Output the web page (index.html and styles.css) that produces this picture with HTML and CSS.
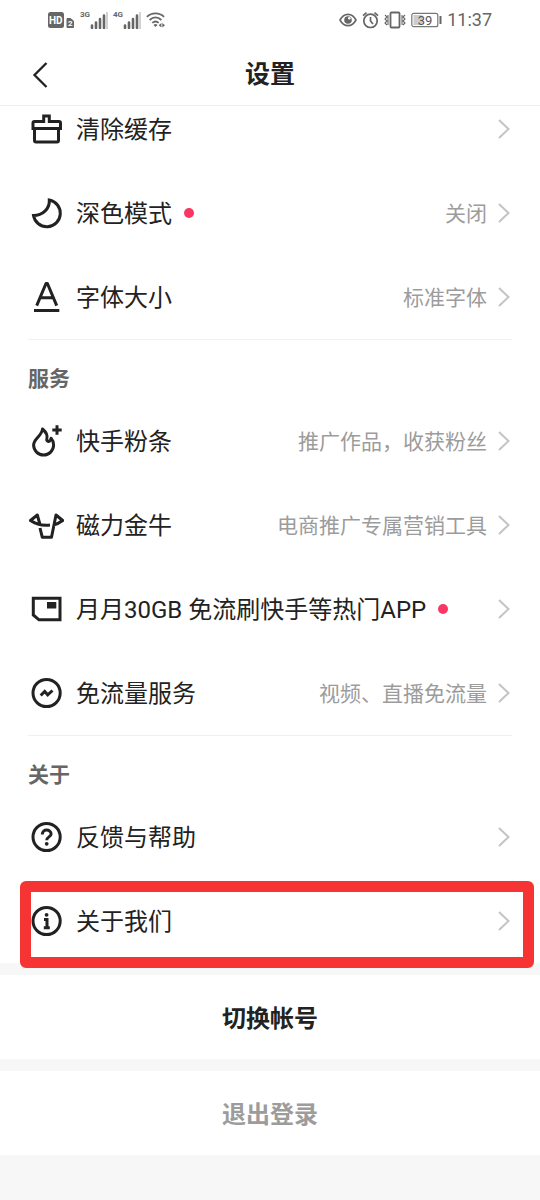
FILE: index.html
```html
<!DOCTYPE html>
<html lang="zh-CN">
<head>
<meta charset="utf-8">
<meta name="viewport" content="width=device-width, initial-scale=1">
<title>设置</title>
<link rel="stylesheet" href="styles.css">
</head>
<body>
<svg class="sprite" aria-hidden="true">
  <symbol id="chevron" viewBox="0 0 12 20"><path d="M1 1l9.500 9L1 19" fill="none" stroke="#c4c4c4" stroke-width="2"/></symbol>
  <symbol id="bars" viewBox="0 0 18 18"><path d="M2 14.500v2.500M6 11.500v5.500M10 8v9M14 4.500v12.500" stroke="#666" stroke-width="2.600" stroke-linecap="round"/><path d="M17 1v17" stroke="#d2d2d2" stroke-width="2"/></symbol>
</svg>
<header class="top">
  <div class="status">
    <div class="status-left">
      <svg width="27" height="16" viewBox="0 0 27 16"><rect width="16" height="16" rx="2.500" fill="#666"/><text class="hd" x="1" y="12">HD</text><path d="M19 6.500h3.500l3 2.500v6.500H19z" fill="#666" stroke="#666" stroke-linejoin="round"/><text class="sim" x="20" y="14">2</text></svg>
      <div class="signal"><span class="net">3G</span><svg width="18" height="18"><use href="#bars"/></svg></div>
      <div class="signal"><span class="net">4G</span><svg width="18" height="18"><use href="#bars"/></svg></div>
      <svg width="19" height="18" viewBox="0 0 21 18" fill="none" stroke="#666" stroke-width="2"><path d="M1 5.500C6.500.300 14.500.300 20 5.500M4 9c4-3.700 9-3.700 13 0M7 12.200c2.300-2 4.700-2 7 0"/><path d="M8.300 14.500l2.200 2.200 2.200-2.200a3 3 0 0 0-4.400 0zM14 14.800l3-2.500v5zM21 14.800l-3-2.500v5z" fill="#666" stroke="none"/></svg>
    </div>
    <div class="status-right">
      <svg width="18" height="16" viewBox="0 0 18 16" fill="none" stroke="#666" stroke-width="1.600"><path d="M1 8c4-7.500 12-7.500 16 0-4 7.500-12 7.500-16 0z"/><circle cx="9" cy="8" r="3.800" fill="#666" stroke="none"/><circle cx="10.300" cy="6.300" r="1.300" fill="#fff" stroke="none"/></svg>
      <svg width="17" height="18" viewBox="0 0 17 18" fill="none" stroke="#666" stroke-width="1.700"><circle cx="8.500" cy="9.800" r="6.700"/><path d="M8.500 6v4l2.500 3M1 4.700l3.500-3M16 4.700l-3.500-3"/></svg>
      <svg width="22" height="18" viewBox="0 0 22 18" fill="none" stroke="#666"><rect x="6.500" y="1.500" width="9" height="15" rx="1" stroke-width="1.800"/><path d="M1 4l2 2-2 2 2 2-2 2 2 2M4 4v10M21 4l-2 2 2 2-2 2 2 2-2 2M18 4v10" stroke-width="1.100"/></svg>
      <svg width="31" height="16" viewBox="0 0 31 16"><rect x=".8" y="1.300" width="26" height="13.400" rx="2" fill="#fff" stroke="#777" stroke-width="1.200"/><path d="M2.500 3h9v10h-9z" fill="#ccc"/><path d="M29.500 4v8" stroke="#666" stroke-width="2"/><text class="battery" x="14" y="13">39</text></svg>
      <time>11:37</time>
    </div>
  </div>
  <div class="nav">
    <button class="back" aria-label="返回"><svg width="16" height="28" viewBox="0 0 16 28"><path d="M14.500 2L2.500 14l12 12" fill="none" stroke="#222" stroke-width="2.300"/></svg></button>
    <h1>设置</h1>
  </div>
</header>
<main>
  <div class="panel">
    <section class="group">
      <button class="row">
        <svg class="icon" viewBox="0 0 36 36"><path d="M6.500 18v11.500q0 1.500 1.500 1.500h21q1.500 0 1.500-1.500V18M15.700 10.500V5h5.600v5.500h9.700q1.500 0 1.500 1.500v5.500h-27.500v-5.500q0-1.500 1.500-1.500z"/></svg>
        <span class="label">清除缓存</span><svg class="chevron"><use href="#chevron"/></svg>
      </button>
      <button class="row">
        <svg class="icon" viewBox="0 0 36 36"><path d="M21.300 5A13.500 13.500 0 1 1 5.500 20.500C14.500 20.500 21.800 14 21.300 5z"/></svg>
        <span class="label">深色模式<i class="dot"></i></span><span class="value">关闭</span><svg class="chevron"><use href="#chevron"/></svg>
      </button>
      <button class="row">
        <svg class="icon" viewBox="0 0 36 36"><path d="M8.700 26.700L18 4.500h1.400L28.700 26.700M12 18.700h13.400M6 31.500h25.300" stroke-linejoin="round"/></svg>
        <span class="label">字体大小</span><span class="value">标准字体</span><svg class="chevron"><use href="#chevron"/></svg>
      </button>
    </section>
    <section class="group">
      <h2>服务</h2>
      <button class="row">
        <svg class="icon" viewBox="0 0 36 36"><path d="M14.500 6C18 9 20 12 18.800 16c-.6 3.500 3.700 3.200 4.300-.7C25 17.500 25.600 19.800 25.600 22a10 10 0 0 1-20 0C5.600 15.500 14 13 14.500 6zM29 2.300v9.400M24.300 7h9.400" stroke-linejoin="round"/></svg>
        <span class="label">快手粉条</span><span class="value">推广作品，收获粉丝</span><svg class="chevron"><use href="#chevron"/></svg>
      </button>
      <button class="row">
        <svg class="icon" viewBox="0 0 36 36"><path d="M9.300 8L2.500 13.500q4.500 3 9.500 4zM2.500 13.500Q11 19.300 22 18M12 21l2.300 9.300h9.200L28 8l6.700 5.500q-4 3-9.200 4.500" stroke-linejoin="round"/></svg>
        <span class="label">磁力金牛</span><span class="value">电商推广专属营销工具</span><svg class="chevron"><use href="#chevron"/></svg>
      </button>
      <button class="row">
        <svg class="icon" viewBox="0 0 36 36"><path d="M5.300 7.300H32v21.500H11L5.300 24z"/><path class="solid" d="M19 11h9.300v6.500H19z"/></svg>
        <span class="label">月月30GB 免流刷快手等热门APP<i class="dot"></i></span><svg class="chevron"><use href="#chevron"/></svg>
      </button>
      <button class="row">
        <svg class="icon" viewBox="0 0 36 36"><circle cx="18.600" cy="18" r="13.600"/><path d="M12.700 20.500l4-4 3 3.300 4.800-4.300"/></svg>
        <span class="label">免流量服务</span><span class="value">视频、直播免流量</span><svg class="chevron"><use href="#chevron"/></svg>
      </button>
    </section>
    <section class="group">
      <h2>关于</h2>
      <button class="row">
        <svg class="icon" viewBox="0 0 36 36"><circle cx="18.600" cy="18" r="13.600"/><path d="M14.300 15.500c0-6 8.800-5.500 8.800-.6 0 3-4.400 3-4.400 6.300"/><circle class="solid" cx="18.700" cy="24.800" r="1.900"/></svg>
        <span class="label">反馈与帮助</span><svg class="chevron"><use href="#chevron"/></svg>
      </button>
      <button class="row marked">
        <svg class="icon" viewBox="0 0 36 36"><circle cx="18.600" cy="18" r="13.600"/><path d="M16 16.500h3V25M15.800 24.700h6"/><circle class="solid" cx="18.600" cy="11.800" r="1.900"/></svg>
        <span class="label">关于我们</span><svg class="chevron"><use href="#chevron"/></svg>
      </button>
    </section>
  </div>
  <button class="action">切换帐号</button>
  <button class="action muted">退出登录</button>
</main>
</body>
</html>
```
FILE: styles.css
```css
* { box-sizing: border-box; }
body {
  margin: 0;
  background: #f7f7f7;
  color: #222;
  font-family: Roboto, "Noto Sans CJK SC", sans-serif;
}
button {
  border: 0;
  padding: 0;
  background: none;
  color: inherit;
  font: inherit;
  cursor: pointer;
}
svg { display: block; flex: none; }
.sprite { position: absolute; width: 0; height: 0; }

.top {
  position: sticky;
  top: 0;
  z-index: 2;
  background: #fff;
  border-bottom: 1px solid #eee;
}
.status {
  display: flex;
  justify-content: space-between;
  align-items: center;
  height: 40px;
  padding: 0 48px;
  color: #666;
}
.status-left { display: flex; align-items: center; gap: 5px; }
.status-right { display: flex; align-items: center; gap: 5px; }
.status time { font-size: 18px; line-height: 24px; }
.signal { display: flex; align-items: flex-start; }
.net { width: 10px; font-size: 8px; line-height: 8px; font-weight: 700; white-space: nowrap; }
.hd { font: 700 10px Roboto, sans-serif; fill: #fff; }
.sim { font: 700 8px Roboto, sans-serif; fill: #fff; }
.battery { font: 13px Roboto, sans-serif; fill: #555; text-anchor: middle; }

.nav {
  display: grid;
  grid-template-columns: 48px 1fr 48px;
  align-items: center;
  height: 65px;
  padding: 4px 16px 0;
}
.back { display: grid; place-items: center; height: 48px; }
h1 {
  margin: 0;
  font-size: 25px;
  line-height: 36px;
  font-weight: 700;
  text-align: center;
}

/* The list is scrolled slightly under the header. */
.panel { margin-top: -19px; background: #fff; }
.group { padding: 0 28px; }
.group + .group::before {
  content: "";
  display: block;
  height: 1px;
  background: #f0f0f0;
}
h2 {
  margin: 0;
  padding: 23px 0 4px;
  color: #666;
  font-size: 21px;
  line-height: 32px;
  font-weight: 700;
}
.row {
  display: flex;
  align-items: center;
  width: 100%;
  height: 84px;
  text-align: left;
}
.icon {
  width: 36px;
  height: 36px;
  margin-right: 12px;
  fill: none;
  stroke: #222;
  stroke-width: 3;
}
.icon .solid { fill: #222; stroke: none; }
.label {
  display: flex;
  align-items: center;
  flex: 1;
  padding-top: 2px;
  font-size: 24px;
  line-height: 36px;
  white-space: nowrap;
}
.dot {
  width: 10px;
  height: 10px;
  margin: 0 0 2px 12px;
  border-radius: 50%;
  background: #fb3662;
}
.value { padding-top: 1px; color: #9c9c9c; font-size: 21px; line-height: 32px; }
.chevron { width: 12px; height: 20px; margin: 0 2px 0 11px; }
.marked { position: relative; }
.marked::after {
  content: "";
  position: absolute;
  inset: 2px -22px -5px -8px;
  border: 11px solid #f73434;
  border-radius: 6px;
  pointer-events: none;
}

.action {
  display: block;
  width: 100%;
  height: 84px;
  margin-top: 12px;
  padding-bottom: 2px;
  background: #fff;
  font-size: 24px;
  font-weight: 700;
}
.muted { color: #9c9c9c; }
```
